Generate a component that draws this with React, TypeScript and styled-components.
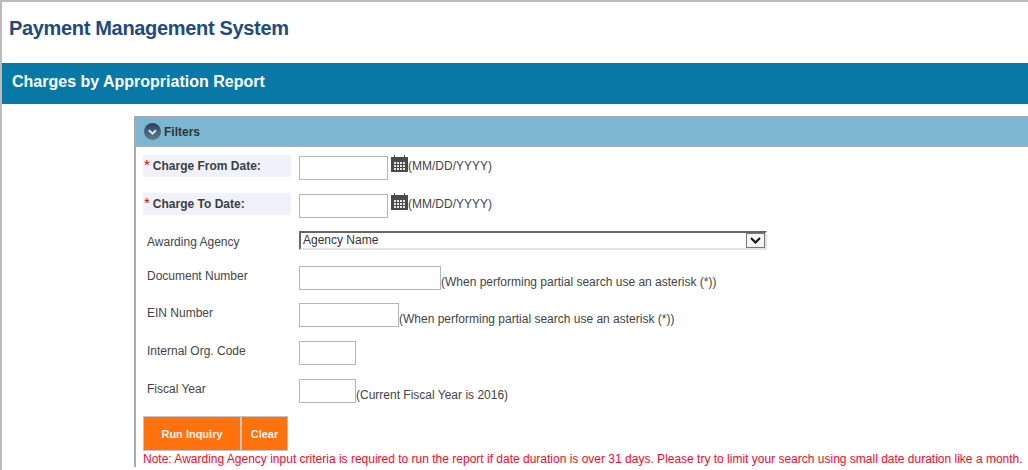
import React from "react";
import styled, { createGlobalStyle } from "styled-components";

const GlobalStyle = createGlobalStyle`
  html, body {
    margin: 0;
    padding: 0;
    background: #fff;
    overflow: hidden;
  }
  body {
    font-family: "Liberation Sans", Arial, sans-serif;
    font-size: 12px;
    color: #444;
  }
`;

const Page = styled.div`
  width: 1028px;
  height: 470px;
  box-sizing: border-box;
  border-top: 2px solid #bbb;
  border-left: 2px solid #bbb;
  overflow: hidden;
`;

const AppTitle = styled.h1`
  margin: 0;
  height: 61px;
  padding: 14px 0 0 7px;
  box-sizing: border-box;
  font-size: 20px;
  line-height: 24px;
  letter-spacing: -0.33px;
  font-weight: bold;
  color: #1f4a7d;
`;

const ReportBar = styled.h2`
  margin: 0;
  height: 41px;
  padding-left: 10px;
  font-size: 16px;
  line-height: 37px;
  font-weight: bold;
  color: #fff;
  background: #0878a6;
`;

const Panel = styled.section`
  margin: 12px 0 0 132px;
  border-left: 2px solid #aaa;
  border-top: 1px solid #aaa;
`;

const PanelHead = styled.div`
  display: flex;
  align-items: center;
  gap: 3px;
  height: 29px;
  padding-left: 8px;
  background: #7cb7d2;
  border-bottom: 1px solid #aaa;
  font-weight: bold;
  color: #333;
`;

const CollapseIcon = () => (
  <svg width="17" height="17" viewBox="0 0 17 17">
    <defs>
      <linearGradient id="knob" x1="0" y1="0" x2="0" y2="1">
        <stop offset="0" stopColor="#2b4258" />
        <stop offset="1" stopColor="#5d7a8e" />
      </linearGradient>
    </defs>
    <circle cx="8.5" cy="8.5" r="8.5" fill="url(#knob)" />
    <path d="M4.8 7.2 8.5 10.6 12.2 7.2" fill="none" stroke="#cfe6f2" strokeWidth="2" />
  </svg>
);

const Form = styled.div`
  display: flex;
  flex-direction: column;
  padding: 8px 0 0 7px;
`;

const Row = styled.div<{ $height?: number }>`
  display: flex;
  align-items: flex-start;
  height: ${({ $height }) => $height ?? 38}px;
`;

const RequiredLabel = styled.label`
  display: flex;
  align-items: center;
  width: 148px;
  height: 22px;
  margin-right: 8px;
  padding-left: 1px;
  box-sizing: border-box;
  background: #eff2fa;
  font-weight: bold;
  color: #3d3d3d;
`;

const Star = styled.span`
  color: #e00000;
  font-size: 15px;
  font-weight: normal;
  line-height: 15px;
  margin-right: 3px;
  position: relative;
  top: -2px;
`;

const PlainLabel = styled.label`
  display: block;
  width: 152px;
  margin-right: 4px;
  padding: 4px 0 0 4px;
  box-sizing: border-box;
  line-height: 15px;
  color: #444;
`;

const TextBox = styled.input<{ $width: number }>`
  display: block;
  width: ${({ $width }) => $width}px;
  height: 24px;
  margin-top: 1px;
  padding: 0 2px;
  box-sizing: border-box;
  border: 1px solid #b5b5b5;
  background: #fff;
  flex: none;
`;

const Hint = styled.span<{ $top: number }>`
  padding-top: ${({ $top }) => $top}px;
  line-height: 14px;
  color: #444;
  white-space: nowrap;
`;

const CalendarSlot = styled.span`
  display: block;
  height: 17px;
  margin-left: 3px;
  flex: none;
`;

const CalendarIcon = () => (
  <CalendarSlot>
    <svg width="17" height="17" viewBox="0 0 17 17">
      <path d="M0 2h3V0h1v2h9V0h1v2h3v15H0z" fill="#4a4a4a" />
      <path
        d="M3 7h2v2H3zM6 7h2v2H6zM9 7h2v2H9zM12 7h2v2h-2zM3 10h2v2H3zM6 10h2v2H6zM9 10h2v2H9zM12 10h2v2h-2zM3 13h2v2H3zM6 13h2v2H6zM9 13h2v2H9zM12 13h2v2h-2z"
        fill="#e8e8e8"
      />
    </svg>
  </CalendarSlot>
);

const SelectBox = styled.div`
  display: flex;
  justify-content: space-between;
  width: 468px;
  height: 19px;
  box-sizing: border-box;
  border: 2px solid;
  border-color: #666 #e3e3e3 #e3e3e3 #666;
  padding-left: 2px;
  line-height: 15px;
  color: #333;
`;

const SelectArrow = styled.span`
  display: flex;
  align-items: center;
  justify-content: center;
  width: 19px;
  height: 15px;
  box-sizing: border-box;
  border: 1px solid #777;
  background: #f4f4f4;
`;

const ButtonRow = styled.div`
  display: flex;
  margin-top: 1px;
`;

const ActionButton = styled.button<{ $width: number }>`
  width: ${({ $width }) => $width}px;
  height: 35px;
  padding: 0;
  box-sizing: border-box;
  border: 1px solid #c4c4c4;
  background: #ff720d;
  color: #f6f6f6;
  font-family: inherit;
  font-size: 11px;
  font-weight: bold;
`;

const Note = styled.p`
  margin: 1px 0 0;
  line-height: 15px;
  color: #ee0c2a;
  white-space: nowrap;
`;

export default function App() {
  return (
    <Page>
      <GlobalStyle />
      <AppTitle>Payment Management System</AppTitle>
      <ReportBar>Charges by Appropriation Report</ReportBar>
      <Panel>
        <PanelHead>
          <CollapseIcon />
          Filters
        </PanelHead>
        <Form>
          <Row>
            <RequiredLabel>
              <Star>*</Star>Charge From Date:
            </RequiredLabel>
            <TextBox $width={89} />
            <CalendarIcon />
            <Hint $top={4}>(MM/DD/YYYY)</Hint>
          </Row>
          <Row>
            <RequiredLabel>
              <Star>*</Star>Charge To Date:
            </RequiredLabel>
            <TextBox $width={89} />
            <CalendarIcon />
            <Hint $top={4}>(MM/DD/YYYY)</Hint>
          </Row>
          <Row $height={34}>
            <PlainLabel>Awarding Agency</PlainLabel>
            <SelectBox>
              Agency Name
              <SelectArrow>
                <svg width="11" height="7" viewBox="0 0 11 7">
                  <path d="M1 1 5.5 5.5 10 1" fill="none" stroke="#111" strokeWidth="2" />
                </svg>
              </SelectArrow>
            </SelectBox>
          </Row>
          <Row $height={37}>
            <PlainLabel>Document Number</PlainLabel>
            <TextBox $width={142} />
            <Hint $top={10}>(When performing partial search use an asterisk (*))</Hint>
          </Row>
          <Row>
            <PlainLabel>EIN Number</PlainLabel>
            <TextBox $width={100} />
            <Hint $top={10}>(When performing partial search use an asterisk (*))</Hint>
          </Row>
          <Row>
            <PlainLabel>Internal Org. Code</PlainLabel>
            <TextBox $width={57} />
          </Row>
          <Row $height={37}>
            <PlainLabel>Fiscal Year</PlainLabel>
            <TextBox $width={57} />
            <Hint $top={10}>(Current Fiscal Year is 2016)</Hint>
          </Row>
          <ButtonRow>
            <ActionButton $width={98}>Run Inquiry</ActionButton>
            <ActionButton $width={47}>Clear</ActionButton>
          </ButtonRow>
          <Note>
            Note: Awarding Agency input criteria is required to run the report if date duration is over 31 days. Please try to limit your search using small date duration like a month.
          </Note>
        </Form>
      </Panel>
    </Page>
  );
}
